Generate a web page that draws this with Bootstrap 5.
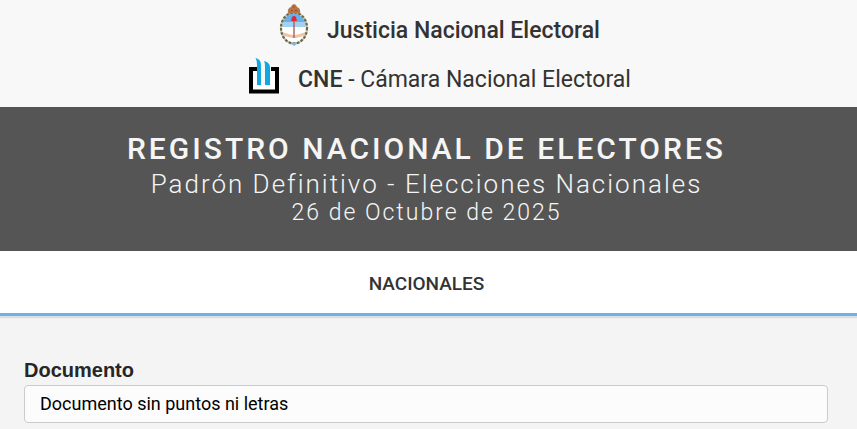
<!DOCTYPE html>
<html lang="es">
<head>
<meta charset="utf-8">
<meta name="viewport" content="width=device-width, initial-scale=1">
<title>Registro Nacional de Electores</title>
<link href="https://cdn.jsdelivr.net/npm/bootstrap@5.3.0/dist/css/bootstrap.min.css" rel="stylesheet">
<style>
body { background: #f4f4f4; color: #333; font-family: Roboto, sans-serif; }
.site-head { background: #f8f8f8; font-size: 23px; line-height: 28px; padding: 4px 0 12px 22px; }
.brand-row { gap: 18px; }
.brand-row + .brand-row { margin-top: 12px; }
.brand-row span { padding-top: 12px; }
.brand-row b, .banner h1 { font-weight: 500; }
.brand-row.cne span { padding-top: 6px; }
.banner { background: #555; color: #f5f5f5; padding: 24px 4px 24px 0; }
.banner h1 { font-size: 30px; line-height: 36px; letter-spacing: 3px; }
.banner p { font-size: 26px; line-height: 30px; letter-spacing: 2px; font-weight: 300; }
.banner h1 + p { padding-top: 2px; }
.banner .date-line { font-size: 23px; line-height: 28px; }
.tabs-bar { background: #fff; border-bottom: 3px solid #66b3ee; box-shadow: 0 2px 1px #ddd; padding-right: 4px; }
.tabs-bar a { color: #333; font-size: 19px; font-weight: 500; line-height: 24px; padding: 21px 16px 17px; }
.search-form { padding: 40px 29px 0 24px; }
.search-form label { color: #262626; font: bold 20px/28px "Liberation Sans", Arial, sans-serif; margin-bottom: 1px; }
.search-form input { background: #fcfcfc; border-color: #ccc; border-radius: 4px; font-size: 18px; line-height: 24px; padding: 6px 15px; }
.search-form input::placeholder { color: #000; opacity: 1; }
</style>
<script src="https://cdn.jsdelivr.net/npm/bootstrap@5.3.0/dist/js/bootstrap.bundle.min.js" defer></script>
</head>
<body>
<header class="site-head">
  <div class="brand-row d-flex justify-content-center align-items-center">
    <svg width="30" height="42" viewBox="0 0 30 42" aria-hidden="true">
      <defs><clipPath id="oval"><ellipse cx="15" cy="24" rx="12" ry="15"/></clipPath></defs>
      <g clip-path="url(#oval)">
        <path fill="#fff" d="M0 0h30v42H0z"/><path fill="#68b0ea" d="M0 6h30v14H0z"/><path fill="#a2d1f4" d="M0 18h30v5H0z"/>
        <path fill="#efc4a7" d="M3 28c5 1 8 3 12 3s7-2 12-3v4c-5 0-8 2-12 2s-7-2-12-2z"/>
      </g>
      <path d="M15 15v19" stroke="#a66259" stroke-width="1.4"/>
      <path d="M12 17l1-4q2-2 4 0l1 4z" fill="#e12838"/>
      <ellipse cx="15" cy="24" rx="13" ry="15.500" fill="none" stroke="#c9c5b2" stroke-width="2"/>
      <ellipse cx="15" cy="24" rx="13" ry="15.500" fill="none" stroke="#6b6848" stroke-width="2.200" stroke-dasharray="2.500 1.700"/>
      <path d="M10 10q-2-2-1-4l1-2 2-1 1-2 2-1 2 1 1 2 2 1 1 2q1 2-1 4-5-2-10 0z" fill="#b77546"/>
      <path d="M12 7l1-1 1 1M16 7l1-1 1 1M14 3h2" fill="none" stroke="#8f5631"/>
      <path d="M12 38l3 1 3-1v2l-3 2-3-2z" fill="#81b9df"/>
    </svg>
    <span><b>Justicia Nacional Electoral</b></span>
  </div>
  <div class="brand-row cne d-flex justify-content-center align-items-center">
    <svg width="32" height="37" viewBox="0 0 32 37" aria-hidden="true">
      <path d="M3 11h26v22.500H3z" fill="#fff" stroke="#000" stroke-width="4"/>
      <path d="M9 8h14v19H9z" fill="#f8f8f8"/>
      <path d="M7.500 0c4 1 5.500 3 5.500 8v19H9V8c0-3 0-5-1.500-8zM16 3c4 1 6 3 6 7v17h-5V10c0-3 0-5-1-7z" fill="#10a9df"/>
    </svg>
    <span><b>CNE</b> - Cámara Nacional Electoral</span>
  </div>
</header>
<main>
  <section class="banner text-center">
    <h1 class="mb-0">REGISTRO NACIONAL DE ELECTORES</h1>
    <p class="mb-0">Padrón Definitivo - Elecciones Nacionales</p>
    <p class="date-line mb-0">26 de Octubre de 2025</p>
  </section>
  <nav class="tabs-bar d-flex justify-content-center" aria-label="Padrones">
    <a class="text-decoration-none" href="#consulta">NACIONALES</a>
  </nav>
  <form class="search-form" id="consulta">
    <label class="d-block" for="documento">Documento</label>
    <input class="form-control" id="documento" type="text" inputmode="numeric" placeholder="Documento sin puntos ni letras">
  </form>
</main>
</body>
</html>
